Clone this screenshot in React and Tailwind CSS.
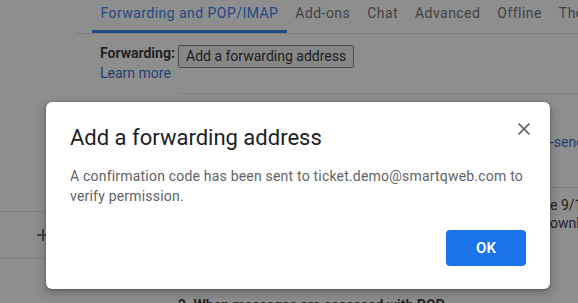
import React from "react";

const tabs = ["Forwarding and POP/IMAP", "Add-ons", "Chat", "Advanced", "Offline", "Themes"];

const PlusIcon = () => (
  <svg width="12" height="12" viewBox="0 0 12 12" className="text-[#5f6368]">
    <path d="M6 0v12M0 6h12" stroke="currentColor" strokeWidth="2" />
  </svg>
);

const CloseIcon = () => (
  <svg width="12" height="12" viewBox="0 0 12 12" className="text-[#5f6368]">
    <path d="M0.6 0.6l10.8 10.8M11.4 0.6L0.6 11.4" stroke="currentColor" strokeWidth="1.6" />
  </svg>
);

// a settings row whose start sits under the dialog, only the tail shows at the right
const SplitRow = ({ hidden, shown, className }) => (
  <div className={"grid grid-cols-[370px_auto] whitespace-nowrap text-[14px] leading-[18px] " + className}>
    <span className="overflow-hidden">{hidden}</span>
    <span>{shown}</span>
  </div>
);

const App = () => {
  return (
    <div className="relative w-[578px] h-[303px] overflow-hidden bg-white font-['Roboto',sans-serif]">
      <div className="flex h-full">
        <aside className="w-[76px] shrink-0 pt-[211px]">
          <div className="h-[47px] border-t border-[#e0e0e0] flex items-center pl-[37px]">
            <PlusIcon />
          </div>
          <div className="border-t border-[#e0e0e0]" />
        </aside>

        <main className="flex-1 min-w-0">
          <nav className="flex h-[34px] border-b border-[#e0e0e0] pl-[16px] whitespace-nowrap">
            {tabs.map((t, i) => (
              <div
                key={t}
                className={
                  "px-[8.5px] pt-[3px] text-[14px] leading-[20px] tracking-[0.45px] " +
                  (i === 0 ? "text-[#1a73e8] border-b-[3px] border-[#1a73e8]" : "text-[#5f6368]")
                }
              >
                {t}
              </div>
            ))}
          </nav>

          <div className="flex pl-[24px] pt-[10px]">
            <div className="w-[78px] shrink-0 pt-[1px]">
              <p className="text-[14px] leading-[16px] font-bold text-[#222]">Forwarding:</p>
              <p className="mt-[3px] text-[14px] leading-[18px] text-[#1a5fc4]">Learn more</p>
            </div>
            <div>
              <button className="h-[23px] px-[7px] border border-[#767676] rounded-[2px] bg-[#efefef] text-[14px] leading-[19px] text-[#111] whitespace-nowrap">
                Add a forwarding address
              </button>
            </div>
          </div>

          <div className="ml-[104px] mt-[11px] border-t border-[#e0e0e0]">
            <SplitRow
              className="mt-[39px] text-[#1a5fc4]"
              hidden="Tip: You can also forward only some of your mail by creating a filter. Learn about non"
              shown="-sender"
            />
            <div className="mt-[36px] border-t border-[#e0e0e0] pt-[8px] text-[#222]">
              <SplitRow
                hidden="1. Status: POP is enabled for all mail that has arrived sinc"
                shown="e 9/17/21"
              />
              <SplitRow
                hidden="Enable POP for all mail (even mail that's already been d"
                shown="ownloaded)"
              />
              <p className="mt-[64px] -ml-[2px] text-[14px] leading-[18px] font-bold whitespace-nowrap">
                2. When messages are accessed with POP
              </p>
            </div>
          </div>
        </main>
      </div>

      <div className="absolute inset-0 bg-[rgba(39,39,39,0.52)]" />

      <div className="absolute left-[46px] top-[102px] w-[504px] rounded-md bg-white pl-[24px] pr-[24px] pt-[22px] pb-[23px] shadow-[0_4px_8px_3px_rgba(0,0,0,0.15),0_1px_3px_rgba(0,0,0,0.3)]">
        <div className="flex items-start justify-between">
          <h2 className="text-[22px] leading-[28px] font-normal text-[#202124]">Add a forwarding address</h2>
          <button className="mt-[-1px] mr-[-4px]">
            <CloseIcon />
          </button>
        </div>
        <p className="mt-[14px] text-[14px] leading-[20px] tracking-[0.2px] text-[#5f6368]">
          A confirmation code has been sent to ticket.demo@smartqweb.com to verify permission.
        </p>
        <div className="mt-[24px] flex justify-end">
          <button className="w-[80px] h-[36px] rounded-[4px] bg-[#1a73e8] text-white text-[15px] font-semibold">
            OK
          </button>
        </div>
      </div>
    </div>
  );
};

export default App;
